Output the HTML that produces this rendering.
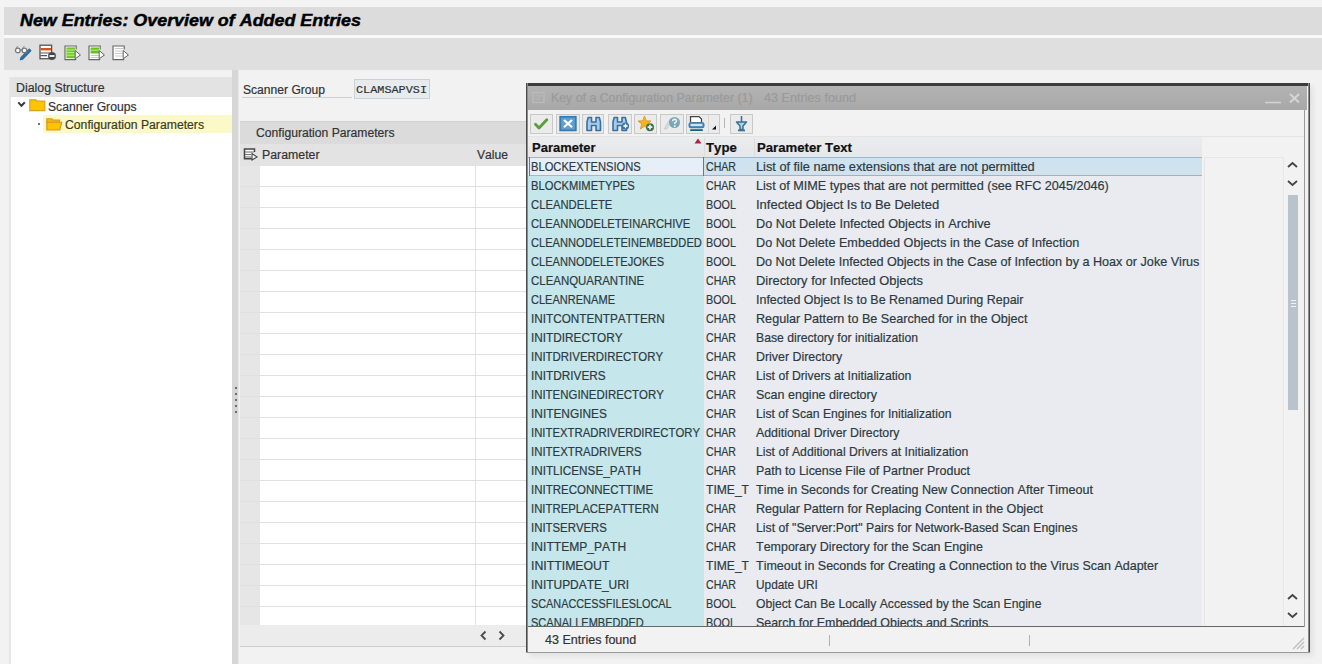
<!DOCTYPE html>
<html><head><meta charset="utf-8"><style>
*{margin:0;padding:0;box-sizing:border-box}
html,body{width:1322px;height:664px;overflow:hidden;background:#f2f2f2;font-family:"Liberation Sans",sans-serif;font-size:12px;color:#333;font-kerning:none}
.a{position:absolute}
.t{position:absolute;white-space:nowrap;line-height:1;transform-origin:0 0;-webkit-text-stroke:0.2px currentColor}
.clip{position:absolute;overflow:hidden}
svg{position:absolute;overflow:visible}
</style></head><body>
<div class="a" style="left:0px;top:0px;width:1322px;height:7px;background:#f3f3f3;"></div>
<div class="a" style="left:4px;top:7px;width:1318px;height:28px;background:#dcdcdc;"></div>
<div class="t" style="left:19.80px;top:13.38px;font-size:16px;font-weight:bold;font-style:italic;color:#000;transform:scaleX(1.1181);-webkit-text-stroke:0.45px #000">New Entries: Overview of Added Entries</div>
<div class="a" style="left:4px;top:35px;width:1318px;height:3px;background:#f9f9f9;"></div>
<div class="a" style="left:4px;top:38px;width:1318px;height:32px;background:#dfdfdf;"></div>
<svg style="left:13px;top:44px" width="20" height="18" viewBox="0 0 20 18"><path d="M16.2 4.2 L18.6 6.6 L10 15.6 L6.4 16.8 L7.4 13.2 Z" fill="#cfe8f6"/><path d="M16.3 5.3 L17.6 6.6 L9.6 14.9 L7.6 15.6 L8.2 13.6 Z" fill="#3f7db0" stroke="#2f6c9c" stroke-width="1.6" stroke-linejoin="round"/><circle cx="4.8" cy="6.4" r="2.3" fill="#fff" stroke="#7a7a7a" stroke-width="1.3"/><circle cx="11.4" cy="6.4" r="2.3" fill="#fff" stroke="#7a7a7a" stroke-width="1.3"/><path d="M7 6 L9.2 6" stroke="#7a7a7a" stroke-width="1.2"/><path d="M3.2 4 L4.8 2 M9.8 4 L11.4 2" stroke="#8a8a8a" stroke-width="1"/></svg>
<svg style="left:39px;top:44px" width="19" height="17" viewBox="0 0 19 17"><rect x="1" y="1.2" width="11.6" height="13.5" fill="#fff" stroke="#555" stroke-width="1.3"/><rect x="1.7" y="4" width="10.3" height="2.4" fill="#d2561e"/><path d="M1.5 9 H12 M1.5 11.6 H8" stroke="#555" stroke-width="1.1"/><circle cx="13" cy="12" r="3.8" fill="#444" stroke="#555" stroke-width="0.6"/><rect x="10.5" y="11.1" width="5" height="1.8" fill="#fff"/></svg>
<svg style="left:64px;top:45px" width="18" height="16" viewBox="0 0 18 16"><path d="M12.2 4.5 V1 H1 V14.6 H12.2" fill="#fff" stroke="#666" stroke-width="1.15"/><rect x="2.4" y="2.4" width="8.8" height="10.8" fill="#72c52e"/><path d="M2.6 5 H11" stroke="#c8f0a0" stroke-width="0.9"/><path d="M2.6 7.6 H11" stroke="#c8f0a0" stroke-width="0.9"/><path d="M2.6 10.2 H11" stroke="#c8f0a0" stroke-width="0.9"/><path d="M11.2 5.5 L16.4 10 L11.2 13.8 Z" fill="#fff" stroke="#606060" stroke-width="1"/></svg>
<svg style="left:88px;top:45px" width="18" height="16" viewBox="0 0 18 16"><path d="M12.2 4.5 V1 H1 V14.6 H12.2" fill="#fff" stroke="#666" stroke-width="1.15"/><rect x="2.6" y="2.5" width="8.4" height="6" fill="#66c21c"/><path d="M2.6 5.2 H11" stroke="#c8f0a0" stroke-width="0.9"/><path d="M2.6 10.5 H11" stroke="#bbb" stroke-width="0.8"/><path d="M2.6 12.5 H11" stroke="#bbb" stroke-width="0.8"/><path d="M11.2 5.5 L16.4 10 L11.2 13.8 Z" fill="#fff" stroke="#606060" stroke-width="1"/></svg>
<svg style="left:112px;top:45px" width="18" height="16" viewBox="0 0 18 16"><path d="M12.2 4.5 V1 H1 V14.6 H12.2" fill="#fff" stroke="#666" stroke-width="1.15"/><path d="M3 3.5 H11" stroke="#bbb" stroke-width="0.8"/><path d="M3 6 H11" stroke="#bbb" stroke-width="0.8"/><path d="M3 8.5 H11" stroke="#bbb" stroke-width="0.8"/><path d="M3 11 H11" stroke="#bbb" stroke-width="0.8"/><path d="M11.2 5.5 L16.4 10 L11.2 13.8 Z" fill="#fff" stroke="#606060" stroke-width="1"/></svg>
<div class="a" style="left:9px;top:77px;width:223px;height:587px;background:#ffffff;"></div>
<div class="a" style="left:9px;top:77px;width:2px;height:587px;background:#e6e6e6;"></div>
<div class="a" style="left:11px;top:77px;width:221px;height:20px;background:#e3e3e3;"></div>
<div class="t" style="left:16.20px;top:81.86px;font-size:12px;color:#333;transform:scaleX(1.0286);">Dialog Structure</div>
<div class="t" style="left:48.40px;top:100.86px;font-size:12px;color:#333;transform:scaleX(1.0128);">Scanner Groups</div>
<div class="a" style="left:43px;top:114.5px;width:189px;height:18.5px;background:#fcf9c9;"></div>
<div class="t" style="left:65.40px;top:118.86px;font-size:12px;color:#3b3b1e;transform:scaleX(1.0166);">Configuration Parameters</div>
<svg style="left:17px;top:101px" width="10" height="7" viewBox="0 0 10 7"><path d="M1.3 1.3 L4.5 4.8 L7.8 1.3" fill="none" stroke="#333b42" stroke-width="2"/></svg>
<svg style="left:29px;top:99px" width="17" height="13" viewBox="0 0 17 13"><path d="M0.8 0.8 H7 L8 2.2 H15.8 V11.6 H0.8 Z" fill="#fdc500" stroke="#d9a21c" stroke-width="1.2"/></svg>
<div class="a" style="left:38px;top:122.5px;width:2px;height:2px;background:#444;border-radius:1px"></div>
<svg style="left:46px;top:118px" width="17" height="13" viewBox="0 0 17 13"><path d="M0.8 0.8 H6 L7 2 H13.5 V4.5 H0.8 Z" fill="#f6b900" stroke="#d09a1a" stroke-width="1.1"/><path d="M0.8 12 V4.2 H15.8 L13.8 12 Z" fill="#fcc400" stroke="#d09a1a" stroke-width="1.1"/></svg>
<div class="a" style="left:232px;top:70px;width:7px;height:594px;background:#d6d6d6;"></div>
<div class="a" style="left:238px;top:70px;width:1px;height:594px;background:#e8e8e8;"></div>
<div class="t" style="left:243.40px;top:83.86px;font-size:12px;color:#333;transform:scaleX(1.0076);">Scanner Group</div>
<div class="a" style="left:242px;top:97px;width:110px;height:1px;background:#cfcfcf;"></div>
<div class="a" style="left:354px;top:79px;width:76px;height:20px;background:#e8ebee;border:1px solid #cdd1d5"></div>
<div class="t" style="left:356.20px;top:83.68px;font-size:11.5px;font-family:'Liberation Mono',monospace;color:#333;transform:scaleX(1.0288);">CLAMSAPVSI</div>
<div class="a" style="left:240px;top:121px;width:290px;height:1px;background:#d2d2d2;"></div>
<div class="a" style="left:240px;top:122px;width:290px;height:22px;background:#dbdbdb;"></div>
<div class="t" style="left:256.40px;top:126.86px;font-size:12px;color:#333;transform:scaleX(1.0129);">Configuration Parameters</div>
<div class="a" style="left:240px;top:144px;width:290px;height:22px;background:#e3e3e3;"></div>
<svg style="left:243px;top:148px" width="16" height="13" viewBox="0 0 16 13"><path d="M11.5 4 V1 H1.5 V10.8 H9" fill="#fff" stroke="#444" stroke-width="1.5"/><path d="M2 4 H11 M2 6.6 H8 M2 9 H8" stroke="#666" stroke-width="1"/><path d="M9 5.5 L14 9 L9 12 Z" fill="#fff" stroke="#444" stroke-width="1.1"/></svg>
<div class="t" style="left:262.40px;top:149.26px;font-size:12px;color:#333;transform:scaleX(1.0264);">Parameter</div>
<div class="t" style="left:477.40px;top:149.26px;font-size:12px;color:#333;transform:scaleX(1.0101);">Value</div>
<div class="a" style="left:240px;top:166px;width:20px;height:459px;background:#e6e6e6;"></div>
<div class="a" style="left:260px;top:166px;width:270px;height:459px;background:#ffffff;"></div>
<div class="a" style="left:475px;top:144px;width:1px;height:481px;background:#e2e2e2;"></div>
<div class="a" style="left:240px;top:186px;width:290px;height:1px;background:#e0e0e0;"></div>
<div class="a" style="left:240px;top:207px;width:290px;height:1px;background:#e0e0e0;"></div>
<div class="a" style="left:240px;top:228px;width:290px;height:1px;background:#e0e0e0;"></div>
<div class="a" style="left:240px;top:249px;width:290px;height:1px;background:#e0e0e0;"></div>
<div class="a" style="left:240px;top:270px;width:290px;height:1px;background:#e0e0e0;"></div>
<div class="a" style="left:240px;top:291px;width:290px;height:1px;background:#e0e0e0;"></div>
<div class="a" style="left:240px;top:312px;width:290px;height:1px;background:#e0e0e0;"></div>
<div class="a" style="left:240px;top:333px;width:290px;height:1px;background:#e0e0e0;"></div>
<div class="a" style="left:240px;top:354px;width:290px;height:1px;background:#e0e0e0;"></div>
<div class="a" style="left:240px;top:375px;width:290px;height:1px;background:#e0e0e0;"></div>
<div class="a" style="left:240px;top:396px;width:290px;height:1px;background:#e0e0e0;"></div>
<div class="a" style="left:240px;top:417px;width:290px;height:1px;background:#e0e0e0;"></div>
<div class="a" style="left:240px;top:438px;width:290px;height:1px;background:#e0e0e0;"></div>
<div class="a" style="left:240px;top:459px;width:290px;height:1px;background:#e0e0e0;"></div>
<div class="a" style="left:240px;top:480px;width:290px;height:1px;background:#e0e0e0;"></div>
<div class="a" style="left:240px;top:501px;width:290px;height:1px;background:#e0e0e0;"></div>
<div class="a" style="left:240px;top:522px;width:290px;height:1px;background:#e0e0e0;"></div>
<div class="a" style="left:240px;top:543px;width:290px;height:1px;background:#e0e0e0;"></div>
<div class="a" style="left:240px;top:564px;width:290px;height:1px;background:#e0e0e0;"></div>
<div class="a" style="left:240px;top:585px;width:290px;height:1px;background:#e0e0e0;"></div>
<div class="a" style="left:240px;top:606px;width:290px;height:1px;background:#e0e0e0;"></div>
<div class="a" style="left:240px;top:625px;width:290px;height:21px;background:#ececec;"></div>
<div class="a" style="left:240px;top:646px;width:290px;height:1px;background:#cdcdcd;"></div>
<svg style="left:479px;top:630px" width="30" height="12" viewBox="0 0 30 12"><path d="M6.5 1.5 L2.5 5.5 L6.5 9.5" fill="none" stroke="#4a4a4a" stroke-width="1.8"/><path d="M20.5 1.5 L24.5 5.5 L20.5 9.5" fill="none" stroke="#4a4a4a" stroke-width="1.8"/></svg>
<div class="a" style="left:526px;top:83px;width:784px;height:570px;background:#f2f2f2;box-shadow:3px 3px 5px rgba(0,0,0,0.07)"></div>
<div class="a" style="left:526px;top:83px;width:784px;height:3px;background:#3c3c3c;border-radius:2px 2px 0 0"></div>
<div class="a" style="left:526px;top:83px;width:1px;height:570px;background:#4a4a4a;"></div>
<div class="a" style="left:527px;top:83px;width:1px;height:570px;background:#8c8c8c;"></div>
<div class="a" style="left:1309px;top:83px;width:1px;height:570px;background:#4a4a4a;"></div>
<div class="a" style="left:1308px;top:83px;width:1px;height:570px;background:#8c8c8c;"></div>
<div class="a" style="left:526px;top:652px;width:784px;height:1px;background:#9a9a9a;"></div>
<div class="a" style="left:528px;top:86px;width:779px;height:24px;background:#ababab;background:linear-gradient(#b3b3b3,#a8a8a8)"></div>
<svg style="left:531px;top:90px" width="16" height="16" viewBox="0 0 16 16"><rect x="2" y="2.5" width="11" height="10" fill="none" stroke="#bababa" stroke-width="1.4"/><path d="M4 6 H11 M4 9 H9" stroke="#b8b8b8" stroke-width="1"/></svg>
<div class="t" style="left:550.90px;top:92.04px;font-size:12.5px;color:#9a9a9a;transform:scaleX(0.9865);">Key of a Configuration Parameter (1)</div>
<div class="t" style="left:764.10px;top:92.04px;font-size:12.5px;color:#9a9a9a;transform:scaleX(1.0106);">43 Entries found</div>
<svg style="left:1262px;top:90px" width="42" height="16" viewBox="0 0 42 16"><path d="M3 12.5 H19" stroke="#d2d2d2" stroke-width="1.6"/><path d="M28 4 L37 12.5 M37 4 L28 12.5" stroke="#d6d6d6" stroke-width="1.9"/></svg>
<div class="a" style="left:528px;top:110px;width:776px;height:27px;background:#f2f2f2;"></div>
<div class="a" style="left:530px;top:114px;width:23px;height:20px;background:#ebebeb;border:1px solid #c9c9c9"></div>
<div class="a" style="left:555.5px;top:114px;width:24px;height:20px;background:#ebebeb;border:1px solid #c9c9c9"></div>
<div class="a" style="left:582px;top:114px;width:22px;height:20px;background:#ebebeb;border:1px solid #c9c9c9"></div>
<div class="a" style="left:607.7px;top:114px;width:24px;height:20px;background:#ebebeb;border:1px solid #c9c9c9"></div>
<div class="a" style="left:634px;top:114px;width:23px;height:20px;background:#ebebeb;border:1px solid #c9c9c9"></div>
<div class="a" style="left:660px;top:114px;width:24px;height:20px;background:#ebebeb;border:1px solid #c9c9c9"></div>
<div class="a" style="left:686px;top:114px;width:34px;height:20px;background:#ebebeb;border:1px solid #c9c9c9"></div>
<div class="a" style="left:730px;top:114px;width:23px;height:20px;background:#ebebeb;border:1px solid #c9c9c9"></div>
<div class="a" style="left:708px;top:115px;width:1px;height:18px;background:#d6d6d6;"></div>
<div class="a" style="left:724px;top:118px;width:1px;height:10px;background:#b5b5b5;"></div>
<svg style="left:530px;top:114px" width="24" height="20" viewBox="0 0 24 20"><path d="M5.5 10.3 L9 14 L16.8 5.7" fill="none" stroke="#5a9e3e" stroke-width="2.8" stroke-linecap="round" stroke-linejoin="round"/></svg>
<svg style="left:556px;top:114px" width="24" height="20" viewBox="0 0 24 20"><rect x="4.2" y="2.8" width="15.6" height="13.6" fill="#5d9fd0" stroke="#3b7cae" stroke-width="1.8"/><path d="M8 6 L16 13.2 M16 6 L8 13.2" stroke="#fff" stroke-width="2.2"/></svg>
<svg style="left:582px;top:114px" width="24" height="20" viewBox="0 0 24 20"><path d="M5 16.5 V8 L6.2 3.5 H9.5 V8 H14 V3.5 H17.3 L18.5 8 V16.5 H14 V11.5 H9.5 V16.5 Z" fill="#a3ccec" stroke="#3b6f9e" stroke-width="1.6" stroke-linejoin="round"/></svg>
<svg style="left:608px;top:114px" width="24" height="20" viewBox="0 0 24 20"><path d="M5 16.5 V8 L6.2 3.5 H9.5 V8 H14 V3.5 H17.3 L18.5 8 V16.5 H14 V11.5 H9.5 V16.5 Z" fill="#a3ccec" stroke="#3b6f9e" stroke-width="1.6" stroke-linejoin="round"/><circle cx="17.5" cy="12" r="3.6" fill="#3b6f9e"/><path d="M17.5 9.8 V14.2 M15.3 12 H19.7" stroke="#fff" stroke-width="1.4"/></svg>
<svg style="left:634px;top:114px" width="24" height="20" viewBox="0 0 24 20"><path d="M10.5 2 L12.3 6.8 L17 7 L13.3 10 L14.6 15 L10.5 12.2 L6.4 15 L7.7 10 L4 7 L8.7 6.8 Z" fill="#f5b41e" stroke="#d9901a" stroke-width="0.8"/><circle cx="16" cy="13.2" r="4" fill="#3d7048"/><path d="M16 10.8 V15.6 M13.6 13.2 H18.4" stroke="#e6f7e8" stroke-width="1.7"/></svg>
<svg style="left:660px;top:114px" width="24" height="20" viewBox="0 0 24 20"><path d="M4 15 L10 5 L11.5 6 L7 15 Z" fill="#dcdcdc" stroke="#c8c8c8" stroke-width="0.8"/><circle cx="14.5" cy="8.5" r="5.5" fill="#7aa7b5"/><path d="M12.6 7.2 Q12.8 5.2 14.6 5.2 Q16.6 5.3 16.5 7 Q16.4 8.2 14.8 9 V10" fill="none" stroke="#e8f4f8" stroke-width="1.5"/><circle cx="14.8" cy="12" r="0.9" fill="#e8f4f8"/></svg>
<svg style="left:686px;top:114px" width="34" height="20" viewBox="0 0 34 20"><path d="M4.5 8 V2.6 H13 L15.5 5 V8" fill="#fff" stroke="#444" stroke-width="1.3"/><rect x="2.5" y="8" width="16" height="6.2" rx="2.5" fill="#3f7fae"/><rect x="4.5" y="9.8" width="12" height="2.4" fill="#c8e4f5"/><rect x="4" y="15.3" width="13" height="1.8" rx="0.8" fill="#1f5a80"/><path d="M30 11.5 V15.5 H26 Z" fill="#111"/></svg>
<svg style="left:730px;top:114px" width="24" height="20" viewBox="0 0 24 20"><path d="M11.5 2 V8" stroke="#3e7090" stroke-width="1.6"/><path d="M6.5 8 H16.5 L13 12 V15.5 H10 V12 Z" fill="#a8d6ea" stroke="#3e7090" stroke-width="1.5" stroke-linejoin="round"/><rect x="8" y="15.5" width="7" height="1.8" fill="#3e7090"/></svg>
<div class="a" style="left:528px;top:136px;width:776px;height:1px;background:#e4e4e4;"></div>
<div class="a" style="left:528px;top:137px;width:674px;height:20px;background:#e7e8eb;background:linear-gradient(#ececec,#e3e7ec)"></div>
<div class="a" style="left:703.5px;top:138px;width:1px;height:18px;background:#dcdcdc;"></div>
<div class="a" style="left:753.5px;top:138px;width:1px;height:18px;background:#dcdcdc;"></div>
<div class="t" style="left:532.20px;top:141.64px;font-size:12.5px;font-weight:bold;color:#111;transform:scaleX(1.0384);">Parameter</div>
<div class="t" style="left:706.00px;top:141.64px;font-size:12.5px;font-weight:bold;color:#111;transform:scaleX(1.0557);">Type</div>
<div class="t" style="left:756.70px;top:141.64px;font-size:12.5px;font-weight:bold;color:#111;transform:scaleX(1.0517);">Parameter Text</div>
<svg style="left:694px;top:138px" width="8" height="6"><path d="M0.5 5.5 L4 0.5 L7.5 5.5Z" fill="#b21e48"/></svg>
<div class="a" style="left:1204px;top:157px;width:79px;height:469px;background:#f2f2f2;border-left:1px solid #e6e6e6;border-top:1px solid #e6e6e6"></div>
<div class="a" style="left:528px;top:157px;width:176px;height:19px;background:#e6eef7;"></div>
<div class="a" style="left:704px;top:157px;width:498px;height:19px;background:#cfe2ef;"></div>
<div class="clip" style="left:528px;top:157px;width:674px;height:19px"><div class="t" style="left:3.40px;top:3.32px;font-size:13px;color:#2d3a41;transform:scaleX(0.8587);">BLOCKEXTENSIONS</div><div class="t" style="left:178.40px;top:3.32px;font-size:13px;color:#2d3a41;transform:scaleX(0.8144);">CHAR</div><div class="t" style="left:228.40px;top:3.32px;font-size:13px;color:#2d3a41;transform:scaleX(0.9810);">List of file name extensions that are not permitted</div></div>
<div class="a" style="left:528px;top:176px;width:176px;height:19px;background:#c5e6eb;"></div>
<div class="a" style="left:704px;top:176px;width:498px;height:19px;background:#e9ebf0;"></div>
<div class="clip" style="left:528px;top:176px;width:674px;height:19px"><div class="t" style="left:3.40px;top:3.32px;font-size:13px;color:#2d3a41;transform:scaleX(0.8604);">BLOCKMIMETYPES</div><div class="t" style="left:178.40px;top:3.32px;font-size:13px;color:#2d3a41;transform:scaleX(0.8144);">CHAR</div><div class="t" style="left:228.40px;top:3.32px;font-size:13px;color:#2d3a41;transform:scaleX(0.9726);">List of MIME types that are not permitted (see RFC 2045/2046)</div></div>
<div class="a" style="left:528px;top:195px;width:176px;height:19px;background:#c5e6eb;"></div>
<div class="a" style="left:704px;top:195px;width:498px;height:19px;background:#e9ebf0;"></div>
<div class="clip" style="left:528px;top:195px;width:674px;height:19px"><div class="t" style="left:3.40px;top:3.32px;font-size:13px;color:#2d3a41;transform:scaleX(0.8656);">CLEANDELETE</div><div class="t" style="left:178.40px;top:3.32px;font-size:13px;color:#2d3a41;transform:scaleX(0.8305);">BOOL</div><div class="t" style="left:228.40px;top:3.32px;font-size:13px;color:#2d3a41;transform:scaleX(0.9976);">Infected Object Is to Be Deleted</div></div>
<div class="a" style="left:528px;top:214px;width:176px;height:19px;background:#c5e6eb;"></div>
<div class="a" style="left:704px;top:214px;width:498px;height:19px;background:#e9ebf0;"></div>
<div class="clip" style="left:528px;top:214px;width:674px;height:19px"><div class="t" style="left:3.40px;top:3.32px;font-size:13px;color:#2d3a41;transform:scaleX(0.8648);">CLEANNODELETEINARCHIVE</div><div class="t" style="left:178.40px;top:3.32px;font-size:13px;color:#2d3a41;transform:scaleX(0.8305);">BOOL</div><div class="t" style="left:228.40px;top:3.32px;font-size:13px;color:#2d3a41;transform:scaleX(0.9779);">Do Not Delete Infected Objects in Archive</div></div>
<div class="a" style="left:528px;top:233px;width:176px;height:19px;background:#c5e6eb;"></div>
<div class="a" style="left:704px;top:233px;width:498px;height:19px;background:#e9ebf0;"></div>
<div class="clip" style="left:528px;top:233px;width:674px;height:19px"><div class="t" style="left:3.40px;top:3.32px;font-size:13px;color:#2d3a41;transform:scaleX(0.8536);">CLEANNODELETEINEMBEDDED</div><div class="t" style="left:178.40px;top:3.32px;font-size:13px;color:#2d3a41;transform:scaleX(0.8305);">BOOL</div><div class="t" style="left:228.40px;top:3.32px;font-size:13px;color:#2d3a41;transform:scaleX(0.9726);">Do Not Delete Embedded Objects in the Case of Infection</div></div>
<div class="a" style="left:528px;top:252px;width:176px;height:19px;background:#c5e6eb;"></div>
<div class="a" style="left:704px;top:252px;width:498px;height:19px;background:#e9ebf0;"></div>
<div class="clip" style="left:528px;top:252px;width:674px;height:19px"><div class="t" style="left:3.40px;top:3.32px;font-size:13px;color:#2d3a41;transform:scaleX(0.8530);">CLEANNODELETEJOKES</div><div class="t" style="left:178.40px;top:3.32px;font-size:13px;color:#2d3a41;transform:scaleX(0.8305);">BOOL</div><div class="t" style="left:228.40px;top:3.32px;font-size:13px;color:#2d3a41;transform:scaleX(0.9694);">Do Not Delete Infected Objects in the Case of Infection by a Hoax or Joke Virus</div></div>
<div class="a" style="left:528px;top:271px;width:176px;height:19px;background:#c5e6eb;"></div>
<div class="a" style="left:704px;top:271px;width:498px;height:19px;background:#e9ebf0;"></div>
<div class="clip" style="left:528px;top:271px;width:674px;height:19px"><div class="t" style="left:3.40px;top:3.32px;font-size:13px;color:#2d3a41;transform:scaleX(0.8804);">CLEANQUARANTINE</div><div class="t" style="left:178.40px;top:3.32px;font-size:13px;color:#2d3a41;transform:scaleX(0.8144);">CHAR</div><div class="t" style="left:228.40px;top:3.32px;font-size:13px;color:#2d3a41;transform:scaleX(0.9914);">Directory for Infected Objects</div></div>
<div class="a" style="left:528px;top:290px;width:176px;height:19px;background:#c5e6eb;"></div>
<div class="a" style="left:704px;top:290px;width:498px;height:19px;background:#e9ebf0;"></div>
<div class="clip" style="left:528px;top:290px;width:674px;height:19px"><div class="t" style="left:3.40px;top:3.32px;font-size:13px;color:#2d3a41;transform:scaleX(0.8488);">CLEANRENAME</div><div class="t" style="left:178.40px;top:3.32px;font-size:13px;color:#2d3a41;transform:scaleX(0.8305);">BOOL</div><div class="t" style="left:228.40px;top:3.32px;font-size:13px;color:#2d3a41;transform:scaleX(0.9590);">Infected Object Is to Be Renamed During Repair</div></div>
<div class="a" style="left:528px;top:309px;width:176px;height:19px;background:#c5e6eb;"></div>
<div class="a" style="left:704px;top:309px;width:498px;height:19px;background:#e9ebf0;"></div>
<div class="clip" style="left:528px;top:309px;width:674px;height:19px"><div class="t" style="left:3.40px;top:3.32px;font-size:13px;color:#2d3a41;transform:scaleX(0.9031);">INITCONTENTPATTERN</div><div class="t" style="left:178.40px;top:3.32px;font-size:13px;color:#2d3a41;transform:scaleX(0.8144);">CHAR</div><div class="t" style="left:228.40px;top:3.32px;font-size:13px;color:#2d3a41;transform:scaleX(0.9705);">Regular Pattern to Be Searched for in the Object</div></div>
<div class="a" style="left:528px;top:328px;width:176px;height:19px;background:#c5e6eb;"></div>
<div class="a" style="left:704px;top:328px;width:498px;height:19px;background:#e9ebf0;"></div>
<div class="clip" style="left:528px;top:328px;width:674px;height:19px"><div class="t" style="left:3.40px;top:3.32px;font-size:13px;color:#2d3a41;transform:scaleX(0.9059);">INITDIRECTORY</div><div class="t" style="left:178.40px;top:3.32px;font-size:13px;color:#2d3a41;transform:scaleX(0.8144);">CHAR</div><div class="t" style="left:228.40px;top:3.32px;font-size:13px;color:#2d3a41;transform:scaleX(0.9381);">Base directory for initialization</div></div>
<div class="a" style="left:528px;top:347px;width:176px;height:19px;background:#c5e6eb;"></div>
<div class="a" style="left:704px;top:347px;width:498px;height:19px;background:#e9ebf0;"></div>
<div class="clip" style="left:528px;top:347px;width:674px;height:19px"><div class="t" style="left:3.40px;top:3.32px;font-size:13px;color:#2d3a41;transform:scaleX(0.8793);">INITDRIVERDIRECTORY</div><div class="t" style="left:178.40px;top:3.32px;font-size:13px;color:#2d3a41;transform:scaleX(0.8144);">CHAR</div><div class="t" style="left:228.40px;top:3.32px;font-size:13px;color:#2d3a41;transform:scaleX(0.9537);">Driver Directory</div></div>
<div class="a" style="left:528px;top:366px;width:176px;height:19px;background:#c5e6eb;"></div>
<div class="a" style="left:704px;top:366px;width:498px;height:19px;background:#e9ebf0;"></div>
<div class="clip" style="left:528px;top:366px;width:674px;height:19px"><div class="t" style="left:3.40px;top:3.32px;font-size:13px;color:#2d3a41;transform:scaleX(0.9072);">INITDRIVERS</div><div class="t" style="left:178.40px;top:3.32px;font-size:13px;color:#2d3a41;transform:scaleX(0.8144);">CHAR</div><div class="t" style="left:228.40px;top:3.32px;font-size:13px;color:#2d3a41;transform:scaleX(0.9392);">List of Drivers at Initialization</div></div>
<div class="a" style="left:528px;top:385px;width:176px;height:19px;background:#c5e6eb;"></div>
<div class="a" style="left:704px;top:385px;width:498px;height:19px;background:#e9ebf0;"></div>
<div class="clip" style="left:528px;top:385px;width:674px;height:19px"><div class="t" style="left:3.40px;top:3.32px;font-size:13px;color:#2d3a41;transform:scaleX(0.8797);">INITENGINEDIRECTORY</div><div class="t" style="left:178.40px;top:3.32px;font-size:13px;color:#2d3a41;transform:scaleX(0.8144);">CHAR</div><div class="t" style="left:228.40px;top:3.32px;font-size:13px;color:#2d3a41;transform:scaleX(0.9623);">Scan engine directory</div></div>
<div class="a" style="left:528px;top:404px;width:176px;height:19px;background:#c5e6eb;"></div>
<div class="a" style="left:704px;top:404px;width:498px;height:19px;background:#e9ebf0;"></div>
<div class="clip" style="left:528px;top:404px;width:674px;height:19px"><div class="t" style="left:3.40px;top:3.32px;font-size:13px;color:#2d3a41;transform:scaleX(0.9137);">INITENGINES</div><div class="t" style="left:178.40px;top:3.32px;font-size:13px;color:#2d3a41;transform:scaleX(0.8144);">CHAR</div><div class="t" style="left:228.40px;top:3.32px;font-size:13px;color:#2d3a41;transform:scaleX(0.9361);">List of Scan Engines for Initialization</div></div>
<div class="a" style="left:528px;top:423px;width:176px;height:19px;background:#c5e6eb;"></div>
<div class="a" style="left:704px;top:423px;width:498px;height:19px;background:#e9ebf0;"></div>
<div class="clip" style="left:528px;top:423px;width:674px;height:19px"><div class="t" style="left:3.40px;top:3.32px;font-size:13px;color:#2d3a41;transform:scaleX(0.8731);">INITEXTRADRIVERDIRECTORY</div><div class="t" style="left:178.40px;top:3.32px;font-size:13px;color:#2d3a41;transform:scaleX(0.8144);">CHAR</div><div class="t" style="left:228.40px;top:3.32px;font-size:13px;color:#2d3a41;transform:scaleX(0.9504);">Additional Driver Directory</div></div>
<div class="a" style="left:528px;top:442px;width:176px;height:19px;background:#c5e6eb;"></div>
<div class="a" style="left:704px;top:442px;width:498px;height:19px;background:#e9ebf0;"></div>
<div class="clip" style="left:528px;top:442px;width:674px;height:19px"><div class="t" style="left:3.40px;top:3.32px;font-size:13px;color:#2d3a41;transform:scaleX(0.8800);">INITEXTRADRIVERS</div><div class="t" style="left:178.40px;top:3.32px;font-size:13px;color:#2d3a41;transform:scaleX(0.8144);">CHAR</div><div class="t" style="left:228.40px;top:3.32px;font-size:13px;color:#2d3a41;transform:scaleX(0.9392);">List of Additional Drivers at Initialization</div></div>
<div class="a" style="left:528px;top:461px;width:176px;height:19px;background:#c5e6eb;"></div>
<div class="a" style="left:704px;top:461px;width:498px;height:19px;background:#e9ebf0;"></div>
<div class="clip" style="left:528px;top:461px;width:674px;height:19px"><div class="t" style="left:3.40px;top:3.32px;font-size:13px;color:#2d3a41;transform:scaleX(0.9002);">INITLICENSE_PATH</div><div class="t" style="left:178.40px;top:3.32px;font-size:13px;color:#2d3a41;transform:scaleX(0.8144);">CHAR</div><div class="t" style="left:228.40px;top:3.32px;font-size:13px;color:#2d3a41;transform:scaleX(0.9584);">Path to License File of Partner Product</div></div>
<div class="a" style="left:528px;top:480px;width:176px;height:19px;background:#c5e6eb;"></div>
<div class="a" style="left:704px;top:480px;width:498px;height:19px;background:#e9ebf0;"></div>
<div class="clip" style="left:528px;top:480px;width:674px;height:19px"><div class="t" style="left:3.40px;top:3.32px;font-size:13px;color:#2d3a41;transform:scaleX(0.8852);">INITRECONNECTTIME</div><div class="t" style="left:178.40px;top:3.32px;font-size:13px;color:#2d3a41;transform:scaleX(0.9303);">TIME_T</div><div class="t" style="left:228.40px;top:3.32px;font-size:13px;color:#2d3a41;transform:scaleX(0.9654);">Time in Seconds for Creating New Connection After Timeout</div></div>
<div class="a" style="left:528px;top:499px;width:176px;height:19px;background:#c5e6eb;"></div>
<div class="a" style="left:704px;top:499px;width:498px;height:19px;background:#e9ebf0;"></div>
<div class="clip" style="left:528px;top:499px;width:674px;height:19px"><div class="t" style="left:3.40px;top:3.32px;font-size:13px;color:#2d3a41;transform:scaleX(0.8745);">INITREPLACEPATTERN</div><div class="t" style="left:178.40px;top:3.32px;font-size:13px;color:#2d3a41;transform:scaleX(0.8144);">CHAR</div><div class="t" style="left:228.40px;top:3.32px;font-size:13px;color:#2d3a41;transform:scaleX(0.9660);">Regular Pattern for Replacing Content in the Object</div></div>
<div class="a" style="left:528px;top:518px;width:176px;height:19px;background:#c5e6eb;"></div>
<div class="a" style="left:704px;top:518px;width:498px;height:19px;background:#e9ebf0;"></div>
<div class="clip" style="left:528px;top:518px;width:674px;height:19px"><div class="t" style="left:3.40px;top:3.32px;font-size:13px;color:#2d3a41;transform:scaleX(0.8756);">INITSERVERS</div><div class="t" style="left:178.40px;top:3.32px;font-size:13px;color:#2d3a41;transform:scaleX(0.8144);">CHAR</div><div class="t" style="left:228.40px;top:3.32px;font-size:13px;color:#2d3a41;transform:scaleX(0.9412);">List of &quot;Server:Port&quot; Pairs for Network-Based Scan Engines</div></div>
<div class="a" style="left:528px;top:537px;width:176px;height:19px;background:#c5e6eb;"></div>
<div class="a" style="left:704px;top:537px;width:498px;height:19px;background:#e9ebf0;"></div>
<div class="clip" style="left:528px;top:537px;width:674px;height:19px"><div class="t" style="left:3.40px;top:3.32px;font-size:13px;color:#2d3a41;transform:scaleX(0.9272);">INITTEMP_PATH</div><div class="t" style="left:178.40px;top:3.32px;font-size:13px;color:#2d3a41;transform:scaleX(0.8144);">CHAR</div><div class="t" style="left:228.40px;top:3.32px;font-size:13px;color:#2d3a41;transform:scaleX(0.9604);">Temporary Directory for the Scan Engine</div></div>
<div class="a" style="left:528px;top:556px;width:176px;height:19px;background:#c5e6eb;"></div>
<div class="a" style="left:704px;top:556px;width:498px;height:19px;background:#e9ebf0;"></div>
<div class="clip" style="left:528px;top:556px;width:674px;height:19px"><div class="t" style="left:3.40px;top:3.32px;font-size:13px;color:#2d3a41;transform:scaleX(0.9453);">INITTIMEOUT</div><div class="t" style="left:178.40px;top:3.32px;font-size:13px;color:#2d3a41;transform:scaleX(0.9303);">TIME_T</div><div class="t" style="left:228.40px;top:3.32px;font-size:13px;color:#2d3a41;transform:scaleX(0.9613);">Timeout in Seconds for Creating a Connection to the Virus Scan Adapter</div></div>
<div class="a" style="left:528px;top:575px;width:176px;height:19px;background:#c5e6eb;"></div>
<div class="a" style="left:704px;top:575px;width:498px;height:19px;background:#e9ebf0;"></div>
<div class="clip" style="left:528px;top:575px;width:674px;height:19px"><div class="t" style="left:3.40px;top:3.32px;font-size:13px;color:#2d3a41;transform:scaleX(0.9177);">INITUPDATE_URI</div><div class="t" style="left:178.40px;top:3.32px;font-size:13px;color:#2d3a41;transform:scaleX(0.8144);">CHAR</div><div class="t" style="left:228.40px;top:3.32px;font-size:13px;color:#2d3a41;transform:scaleX(0.9112);">Update URI</div></div>
<div class="a" style="left:528px;top:594px;width:176px;height:19px;background:#c5e6eb;"></div>
<div class="a" style="left:704px;top:594px;width:498px;height:19px;background:#e9ebf0;"></div>
<div class="clip" style="left:528px;top:594px;width:674px;height:19px"><div class="t" style="left:3.40px;top:3.32px;font-size:13px;color:#2d3a41;transform:scaleX(0.8347);">SCANACCESSFILESLOCAL</div><div class="t" style="left:178.40px;top:3.32px;font-size:13px;color:#2d3a41;transform:scaleX(0.8305);">BOOL</div><div class="t" style="left:228.40px;top:3.32px;font-size:13px;color:#2d3a41;transform:scaleX(0.9359);">Object Can Be Locally Accessed by the Scan Engine</div></div>
<div class="a" style="left:528px;top:613px;width:176px;height:13px;background:#c5e6eb;"></div>
<div class="a" style="left:704px;top:613px;width:498px;height:13px;background:#e9ebf0;"></div>
<div class="clip" style="left:528px;top:613px;width:674px;height:13px"><div class="t" style="left:3.40px;top:3.32px;font-size:13px;color:#2d3a41;transform:scaleX(0.8486);">SCANALLEMBEDDED</div><div class="t" style="left:178.40px;top:3.32px;font-size:13px;color:#2d3a41;transform:scaleX(0.8305);">BOOL</div><div class="t" style="left:228.40px;top:3.32px;font-size:13px;color:#2d3a41;transform:scaleX(0.9560);">Search for Embedded Objects and Scripts</div></div>
<div class="a" style="left:528px;top:156.5px;width:674px;height:1.2px;background:#e9a36e;"></div>
<div class="a" style="left:704px;top:175px;width:498px;height:1.2px;background:#e2a070;"></div>
<div class="a" style="left:529px;top:175px;width:175px;height:1.2px;background:#e3a48a;"></div>
<div class="a" style="left:529px;top:157px;width:175px;height:19px;border:1px solid #d9485a;border-top:none;border-bottom:none"></div>
<svg style="left:1287px;top:162px" width="11" height="6" viewBox="0 0 11 6"><path d="M1 5 L5.5 1 L10 5" fill="none" stroke="#454545" stroke-width="1.8"/></svg>
<svg style="left:1287px;top:180px" width="11" height="6" viewBox="0 0 11 6"><path d="M1 1 L5.5 5 L10 1" fill="none" stroke="#454545" stroke-width="1.8"/></svg>
<svg style="left:1287px;top:594px" width="11" height="6" viewBox="0 0 11 6"><path d="M1 5 L5.5 1 L10 5" fill="none" stroke="#454545" stroke-width="1.8"/></svg>
<svg style="left:1287px;top:612px" width="11" height="6" viewBox="0 0 11 6"><path d="M1 1 L5.5 5 L10 1" fill="none" stroke="#454545" stroke-width="1.8"/></svg>
<div class="a" style="left:1283px;top:157px;width:1px;height:469px;background:#e8e8e8;"></div>
<div class="a" style="left:1288px;top:195px;width:10px;height:215px;background:#b9c3cc;"></div>
<div class="a" style="left:1290.5px;top:299.5px;width:5px;height:1.5px;background:#eef4f8;"></div>
<div class="a" style="left:1290.5px;top:302.5px;width:5px;height:1.5px;background:#eef4f8;"></div>
<div class="a" style="left:1290.5px;top:305.5px;width:5px;height:1.5px;background:#eef4f8;"></div>
<div class="a" style="left:528px;top:626px;width:777px;height:1px;background:#666666;"></div>
<div class="a" style="left:1304px;top:110px;width:1px;height:517px;background:#9a9a9a;"></div>
<div class="t" style="left:544.90px;top:634.44px;font-size:12.5px;color:#333;transform:scaleX(1.0026);">43 Entries found</div>
<div class="a" style="left:829px;top:635px;width:1px;height:11px;background:#b0b0b0;"></div>
<div class="a" style="left:1029px;top:635px;width:1px;height:11px;background:#b0b0b0;"></div>
<svg style="left:1290px;top:635px" width="16" height="16" viewBox="0 0 16 16"><path d="M3 14 L14 3 M7 14 L14 7 M11 14 L14 11" stroke="#c2c2c2" stroke-width="1.5"/></svg>
<div class="a" style="left:234.5px;top:386.5px;width:2.5px;height:2.5px;background:#4a4a4a;border-radius:1px"></div>
<div class="a" style="left:234.5px;top:392.5px;width:2.5px;height:2.5px;background:#4a4a4a;border-radius:1px"></div>
<div class="a" style="left:234.5px;top:398.5px;width:2.5px;height:2.5px;background:#4a4a4a;border-radius:1px"></div>
<div class="a" style="left:234.5px;top:404.5px;width:2.5px;height:2.5px;background:#4a4a4a;border-radius:1px"></div>
<div class="a" style="left:234.5px;top:410.5px;width:2.5px;height:2.5px;background:#4a4a4a;border-radius:1px"></div>
</body></html>
